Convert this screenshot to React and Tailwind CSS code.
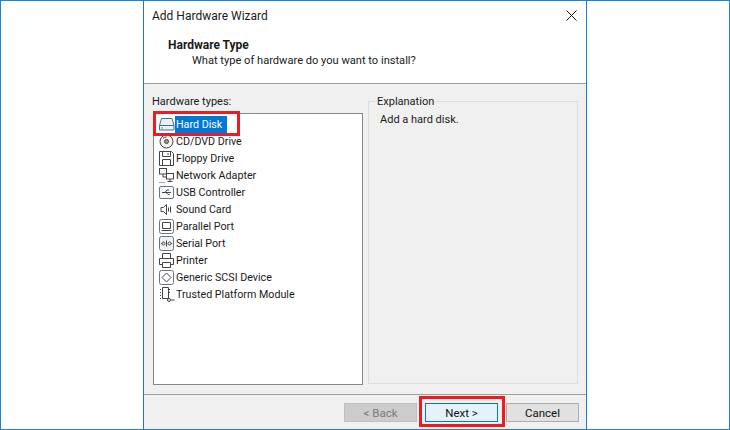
const HW_ICONS = {
  disk: (
    <>
      <path d="M3.500 2.500h10.500l2 7v4.500H1.500V9.500z" fill="#eaf1f8" />
      <path d="M1.500 9.500h14.500M3.500 12h1.500" />
    </>
  ),
  cd: (
    <>
      <circle cx="8.500" cy="8.500" r="6.500" fill="#f2f2f2" />
      <circle cx="8.500" cy="8.500" r="2" fill="#9a9a9a" />
      <path d="M5 5.500A4.500 4.500 0 0 1 8.500 4" />
    </>
  ),
  floppy: (
    <>
      <path d="M1.500 1.500h12l2 2v12h-14z" />
      <path d="M4.500 1.500v5h8v-5M4.500 15.500v-6h8v6M10 3v2" />
    </>
  ),
  network: (
    <>
      <rect x="1.500" y="1.500" width="7" height="5.500" />
      <rect x="8.500" y="6.500" width="7" height="5.500" fill="#fff" />
      <path d="M12 12v2M9.500 14.500h5M5 7v3h3" />
      <path d="M1.500 15.500h6" strokeDasharray="1 1" />
    </>
  ),
  usb: (
    <>
      <rect x="1.500" y="2.500" width="14" height="12" rx="1.500" stroke="#6b7480" fill="#f6f8fa" />
      <path d="M4 8.500h9M7 8.500l2-2.500h2M8 8.500l2 2h1.500" />
    </>
  ),
  sound: (
    <>
      <path d="M3 6.500h2.500l3-3v10l-3-3H3z" />
      <path d="M10.500 6.500v4M12.500 5.500v6" />
    </>
  ),
  parallel: (
    <>
      <rect x="1.500" y="1.500" width="14" height="14" rx="2" stroke="#6b7480" />
      <path d="M4.500 4.500h8v6h-8zM3.500 12.500h10" />
    </>
  ),
  serial: (
    <>
      <rect x="1.500" y="1.500" width="14" height="14" rx="2" stroke="#6b7480" fill="#eef2f6" />
      <circle cx="5.500" cy="8.500" r="1.500" />
      <circle cx="11.500" cy="8.500" r="1.500" />
      <path d="M8.500 5.500v6M3 8.500h1M13 8.500h1" />
    </>
  ),
  printer: (
    <>
      <path d="M4.500 6.500v-5h8v5" />
      <path d="M4.500 12.500h-3v-6h14v6h-3" />
      <path d="M4.500 10.500h8v5h-8z" />
    </>
  ),
  scsi: (
    <>
      <rect x="1.500" y="1.500" width="14" height="14" rx="2" stroke="#6b7480" />
      <path d="M8.500 4l4.500 4.500-4.500 4.500L4 8.500z" />
    </>
  ),
  tpm: (
    <>
      <path d="M4.500 1.500h6v11h-6z" />
      <path d="M2 3.500h2M2 6.500h2M2 9.500h2M2 12.500h2M11 3.500h2M11 6.500h2" strokeDasharray="1 1" />
      <circle cx="11" cy="14" r="1.500" />
      <path d="M12.500 14h4" />
    </>
  ),
}

const HARDWARE = [
  ['disk', 'Hard Disk'],
  ['cd', 'CD/DVD Drive'],
  ['floppy', 'Floppy Drive'],
  ['network', 'Network Adapter'],
  ['usb', 'USB Controller'],
  ['sound', 'Sound Card'],
  ['parallel', 'Parallel Port'],
  ['serial', 'Serial Port'],
  ['printer', 'Printer'],
  ['scsi', 'Generic SCSI Device'],
  ['tpm', 'Trusted Platform Module'],
]

function HwRow({ icon, label, selected }) {
  return (
    <div className="flex items-center h-[17px]">
      <svg className="w-[17px] h-[17px] shrink-0" viewBox="0 0 17 17" fill="none" stroke={selected ? '#3f6f9e' : '#444'} strokeWidth={1}>
        {HW_ICONS[icon]}
      </svg>
      <span className={selected ? 'bg-[#0078d7] text-white pl-[1px] pr-[5px] leading-[17px]' : 'pl-[1px] leading-[17px]'}>{label}</span>
    </div>
  )
}

function WizButton({ children, variant }) {
  const styles = {
    disabled: 'bg-[#cccccc] border-[#bfbfbf] text-[#7a7a7a]',
    primary: 'bg-[#e5f1fb] border-[#0078d7] text-[#111]',
    normal: 'bg-[#e1e1e1] border-[#adadad] text-[#111]',
  }
  return (
    <div className={`w-[73px] h-[19px] pt-[2px] border flex items-center justify-center text-[11.5px] ${styles[variant]}`}>
      {children}
    </div>
  )
}

export default function App() {
  return (
    <div className="relative w-[730px] h-[430px] bg-white overflow-hidden border border-[#1883d7] text-[11px] text-[#1a1a1a] font-['Roboto','Open_Sans',sans-serif]">
      <div className="ml-[142px] w-[444px] h-[428px] border-x border-l-[#2a73ad] border-r-[#1883d7] flex flex-col">
        {/* header */}
        <div className="relative h-[83px] shrink-0 bg-white border-b border-[#a0a0a0]">
          <div className="pl-[8px] pt-[7px] leading-[17px] text-[12px]">Add Hardware Wizard</div>
          <div className="pl-[24px] pt-[12px] font-bold leading-[16px] text-[12px]">Hardware Type</div>
          <div className="pl-[48px] leading-[16px] text-[11.1px]">What type of hardware do you want to install?</div>
          <svg className="absolute right-[9px] top-[9px] w-[11px] h-[11px]" viewBox="0 0 11 11" stroke="#111" strokeWidth={1}>
            <path d="M0.500 0.500l10 10M10.500 0.500l-10 10" />
          </svg>
        </div>

        {/* body */}
        <div className="flex-1 bg-[#f0f0f0] flex flex-col">
          <div className="h-[310px] shrink-0 flex gap-[5px] pl-[8px] pt-[9px]">
            <div className="w-[211px] flex flex-col">
              <div className="leading-[17px] h-[20px]">Hardware types:</div>
              <div className="ml-[1px] w-[210px] h-[272px] bg-white border border-[#828790] pl-[4px] pt-[2px] text-[10.7px]">
                {HARDWARE.map(([icon, label], i) => (
                  <HwRow key={label} icon={icon} label={label} selected={i === 0} />
                ))}
              </div>
            </div>
            <div className="relative w-[210px] h-[283px] mt-[8px] border border-[#dcdcdc]">
              <div className="absolute -top-[8px] left-[6px] bg-[#f0f0f0] px-[2px] leading-[15px]">Explanation</div>
              <div className="pl-[11px] pt-[10px] leading-[16px]">Add a hard disk.</div>
            </div>
          </div>

          {/* footer */}
          <div className="flex-1 border-t border-[#a0a0a0] flex gap-[8px] pl-[200px] pt-[8px]">
            <WizButton variant="disabled">&lt; Back</WizButton>
            <WizButton variant="primary">Next &gt;</WizButton>
            <WizButton variant="normal">Cancel</WizButton>
          </div>
        </div>
      </div>

      {/* red annotations */}
      <div className="absolute left-[152px] top-[110px] w-[87px] h-[25px] border-[3px] border-[#ed1c24]" />
      <div className="absolute left-[418px] top-[395px] w-[86px] h-[31px] border-[3px] border-[#ed1c24]" />
    </div>
  )
}
